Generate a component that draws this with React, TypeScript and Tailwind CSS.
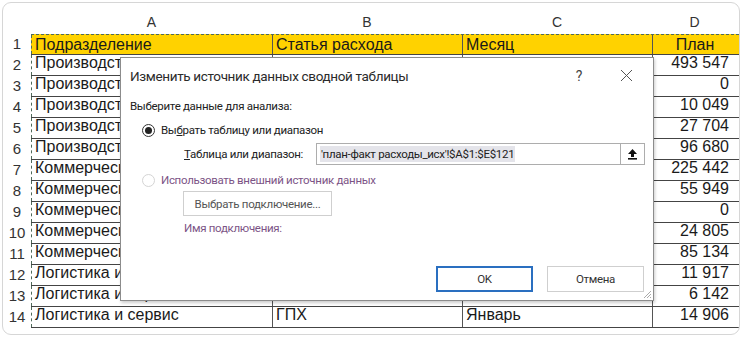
import React from "react";

const rows: [string, string, string, string][] = [
  ["Производство", "", "", "493 547"],
  ["Производство", "", "", "0"],
  ["Производство", "", "", "10 049"],
  ["Производство", "", "", "27 704"],
  ["Производство", "", "", "96 680"],
  ["Коммерческий отдел", "", "", "225 442"],
  ["Коммерческий отдел", "", "", "55 949"],
  ["Коммерческий отдел", "", "", "0"],
  ["Коммерческий отдел", "", "", "24 805"],
  ["Коммерческий отдел", "", "", "85 134"],
  ["Логистика и сервис", "", "", "11 917"],
  ["Логистика и сервис", "", "", "6 142"],
  ["Логистика и сервис", "ГПХ", "Январь", "14 906"],
];

function Radio({ checked, disabled }: { checked?: boolean; disabled?: boolean }) {
  return (
    <span
      className={`flex h-[13px] w-[13px] shrink-0 items-center justify-center rounded-full border ${
        disabled ? "border-[#d4d4d4]" : "border-[#333]"
      } bg-white`}
    >
      {checked && <span className="h-[7px] w-[7px] rounded-full bg-[#222]" />}
    </span>
  );
}

function Dialog() {
  return (
    <div className="absolute left-[117px] top-[54px] flex h-[244px] w-[534px] flex-col border border-[#8c8c8c] bg-white text-[11.5px] leading-[14px] tracking-[-0.3px] text-[#222] shadow-[1px_2px_3px_rgba(0,0,0,0.2)] [font-family:Roboto,'Liberation_Sans',sans-serif]">
      <div className="flex h-[35px] shrink-0 items-center pl-[9px] pr-[20px]">
        <span className="text-[13.5px] tracking-[-0.35px] text-[#2b2b2b]">Изменить источник данных сводной таблицы</span>
        <span className="ml-auto text-[14px] text-[#444]">?</span>
        <svg className="ml-[38px]" width="13" height="13" viewBox="0 0 13 13">
          <path d="M1 1L12 12M12 1L1 12" stroke="#555" strokeWidth="1" />
        </svg>
      </div>
      <div className="mt-[6px] h-[14px] pl-[9px]">Выберите данные для анализа:</div>
      <div className="mt-[10px] flex h-[14px] items-center gap-[6px] pl-[21px]">
        <Radio checked />
        <span>
          Вы<span className="underline">б</span>рать таблицу или диапазон
        </span>
      </div>
      <div className="mt-[6px] flex h-[22px] items-center pl-[63px]">
        <span className="w-[132px] shrink-0 whitespace-nowrap">
          <span className="underline">Т</span>аблица или диапазон:
        </span>
        <div className="flex h-[22px] w-[329px] shrink-0 items-center border border-[#adadad] pl-[3px]">
          <span className="bg-[#e4e4ea] px-[1px] leading-[16px] text-[#222]">'план-факт расходы_исх'!$A$1:$E$121</span>
          <span className="ml-auto flex h-full w-[24px] items-center justify-center border-l border-[#adadad]">
            <svg width="11" height="12" viewBox="0 0 11 12">
              <path d="M5.5 1L1 6h3v3h3V6h3z" fill="#111" />
              <rect x="1" y="10" width="9" height="1.6" fill="#111" />
            </svg>
          </span>
        </div>
      </div>
      <div className="mt-[8px] flex h-[14px] items-center gap-[6px] pl-[21px] text-[#7c5486]">
        <Radio disabled />
        <span>Использовать внешний источник данных</span>
      </div>
      <div className="ml-[62px] mt-[4px] flex h-[25px] w-[149px] shrink-0 items-center justify-center border border-[#cfcfcf] text-[#555]">
        Выбрать подключение...
      </div>
      <div className="ml-[63px] mt-[5px] h-[14px] text-[#7c5486]">Имя подключения:</div>
      <div className="mb-[8px] mt-auto flex justify-end gap-[14px] pr-[9px]">
        <div className="flex h-[26px] w-[97px] items-center justify-center border-2 border-[#2a6fc0] text-[#333]">
          OK
        </div>
        <div className="flex h-[26px] w-[97px] items-center justify-center border border-[#cfcfcf] text-[#333]">
          Отмена
        </div>
      </div>
      <svg className="absolute bottom-[1px] right-[1px]" width="10" height="10" viewBox="0 0 10 10">
        <path d="M9 2L2 9M9 5L5 9M9 8L8 9" stroke="#aaa" strokeWidth="1" />
      </svg>
    </div>
  );
}

export default function App() {
  return (
    <div className="h-[337px] w-[742px] bg-white p-[2px] [font-family:'Liberation_Sans',Arial,sans-serif]">
      <div className="relative h-[333px] w-[738px] overflow-hidden rounded-[9px] border border-[#d6d6d6]">
        <div className="flex h-[31px] pt-[9px] text-[14px] text-[#333]">
          <div className="w-[28px]" />
          <div className="w-[241px] text-center">A</div>
          <div className="w-[190px] text-center">B</div>
          <div className="w-[190px] text-center">C</div>
          <div className="w-[85px] text-center">D</div>
        </div>
        <div className="flex h-[21px] items-center text-[16px] text-[#1a1a1a]">
          <div className="w-[28px] text-center text-[15px] text-[#333]">1</div>
          <div className="flex h-full flex-1 border-b border-t border-dashed border-t-[#4f6a5a] border-b-[#444] bg-[#ffd200] [border-bottom-style:solid]">
            <div className="w-[241px] border-l border-dashed border-l-[#4f6a5a] pl-[3px] leading-[19px]">Подразделение</div>
            <div className="w-[190px] border-l border-[#555] pl-[3px] leading-[19px]">Статья расхода</div>
            <div className="w-[190px] border-l border-[#555] pl-[3px] leading-[19px]">Месяц</div>
            <div className="w-[85px] border-l border-[#555] text-center leading-[19px]">План</div>
          </div>
        </div>
        {rows.map((r, i) => (
          <div key={i} className="flex h-[21px] items-center text-[16px] text-[#1a1a1a]">
            <div className="w-[28px] text-center text-[15px] text-[#333]">{i + 2}</div>
            <div className="flex h-full flex-1 border-b border-[#444]">
              <div className="w-[241px] overflow-hidden whitespace-nowrap border-l border-dashed border-l-[#4f6a5a] pl-[3px] leading-[16px]">
                {r[0]}
              </div>
              <div className="w-[190px] border-l border-[#555] pl-[3px] leading-[16px]">{r[1]}</div>
              <div className="w-[190px] border-l border-[#555] pl-[3px] leading-[16px]">{r[2]}</div>
              <div className="w-[85px] border-l border-[#555] pr-[8px] text-right leading-[16px]">{r[3]}</div>
            </div>
          </div>
        ))}
        <Dialog />
      </div>
    </div>
  );
}
